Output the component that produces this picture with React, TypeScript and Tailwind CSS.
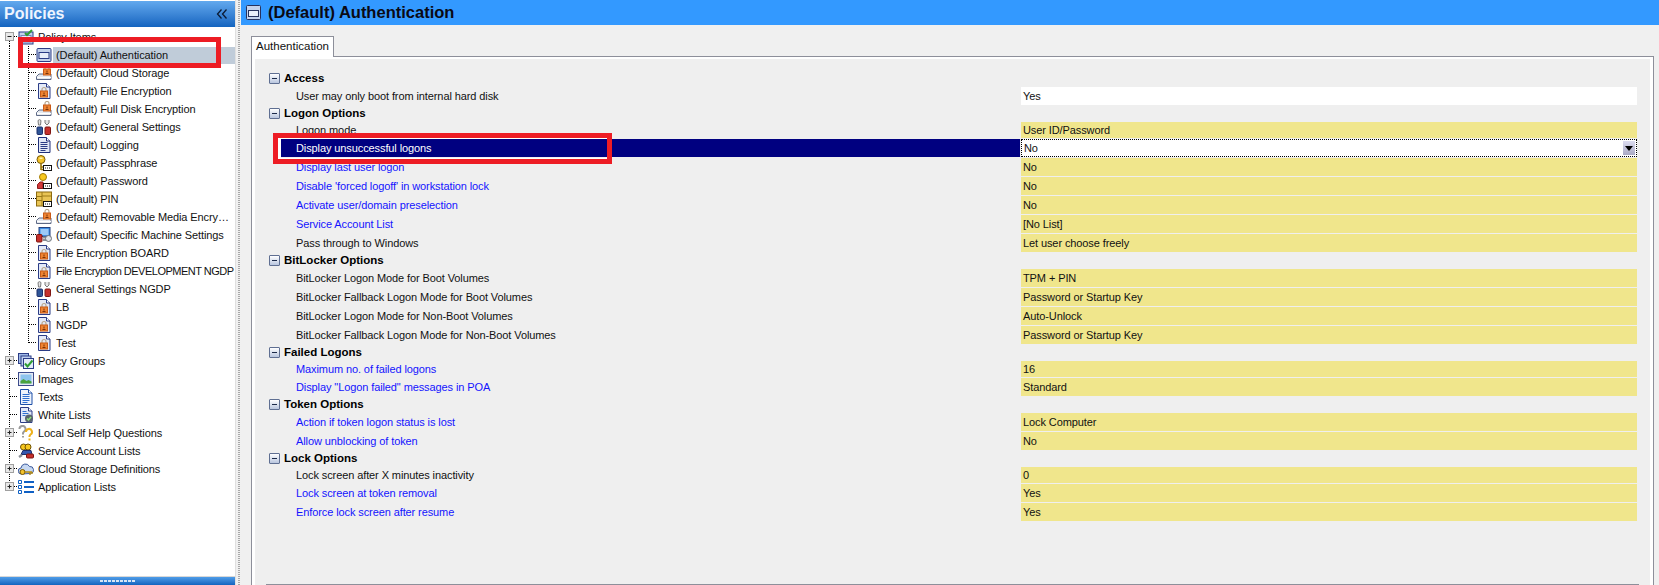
import React from 'react';

const FONT = "font-['Liberation_Sans',sans-serif]";

type IconKind =
  | 'window' | 'diskLock' | 'docLock' | 'settings' | 'doc' | 'passphrase' | 'password' | 'pin'
  | 'machine' | 'policy' | 'groups' | 'image' | 'texts' | 'whitelist' | 'help' | 'service' | 'cloud' | 'apps';

const Card = () => (
  <g>
    <rect x="7.5" y="10.5" width="8" height="5" fill="#fff" stroke="#111" />
    <path d="M9 13h1M11 13h1M13 13h1" stroke="#111" />
  </g>
);

const Lock = ({ x = 0, y = 0 }: { x?: number; y?: number }) => (
  <g transform={`translate(${x} ${y})`}>
    <path d="M6 7V5.5a2 2 0 0 1 4 0V7" fill="none" stroke="#b8a58c" strokeWidth="1.2" />
    <rect x="4.5" y="7" width="7" height="6" fill="#ee8433" stroke="#c85a17" />
    <path d="M8 8.5v2M6.5 11.5h3" stroke="#7a3208" />
  </g>
);

const Doc = ({ stroke = '#2b3c86', fill = '#e3e9f7' }: { stroke?: string; fill?: string }) => (
  <g>
    <path d="M2.5.5h8l3.5 3.5v11.5H2.5z" fill={fill} stroke={stroke} />
    <path d="M10.5.5V4H14" fill="#fff" stroke={stroke} />
  </g>
);

const TreeIcon = ({ kind }: { kind: IconKind }) => {
  const parts: Record<IconKind, React.ReactNode> = {
    window: (
      <g>
        <rect x="1" y="1.5" width="14" height="13" rx="1" fill="#c4d2ec" stroke="#2b3c86" />
        <rect x="3" y="5.5" width="10" height="6" fill="#e8eefa" stroke="#2b3c86" />
      </g>
    ),
    diskLock: (
      <g>
        <path d="M3 9h12v5.5H.5v-3z" fill="#e4e8ee" stroke="#5e6a86" />
        <path d="M1 12.5h14" stroke="#fff" />
        <Lock x={3} y={-3} />
      </g>
    ),
    docLock: (
      <g>
        <Doc />
        <Lock y={1} />
      </g>
    ),
    settings: (
      <g>
        <path d="M2 1.5a2 2 0 0 1 3 0L4.5 6h-2z" fill="#e4e4e4" stroke="#7c7c7c" />
        <path d="M9 1v3l2 2 2-2V1" fill="#e4e4e4" stroke="#7c7c7c" />
        <rect x="1" y="8" width="5.5" height="7.5" rx="1" fill="#2f5597" stroke="#1d2f6b" />
        <rect x="9" y="8" width="5.5" height="7.5" rx="1" fill="#c6302c" stroke="#7e1511" />
      </g>
    ),
    doc: (
      <g>
        <Doc stroke="#1f2f7a" />
        <path d="M4.500 5.500h7M4.500 7.500h7M4.500 9.500h7M4.500 11.500h7M4.500 13.500h5" stroke="#2b3c86" />
      </g>
    ),
    passphrase: (
      <g>
        <circle cx="5" cy="4.500" r="4" fill="#f3c22b" stroke="#7a5a05" />
        <rect x="3.500" y="2.500" width="3" height="1.500" fill="#fff3b0" />
        <path d="M5 8.500v6.500M5 12h2.500M5 14.500h2" stroke="#9c7405" strokeWidth="1.600" />
        <Card />
      </g>
    ),
    password: (
      <g>
        <circle cx="7" cy="4" r="3.500" fill="#f7c81e" stroke="#a57c04" />
        <path d="M1.500 15.500v-4l2.500-2.500h3v6.500z" fill="#d23a3a" stroke="#8f1c1c" />
        <Card />
      </g>
    ),
    pin: (
      <g>
        <rect x=".5" y="1" width="15" height="14" fill="#e9c455" stroke="#8c6a10" />
        <path d="M6 1v14M1 5.500h5M1 9.500h5M6 5h9" stroke="#9c7a18" />
        <Card />
      </g>
    ),
    machine: (
      <g>
        <rect x="3" y=".5" width="11" height="9" fill="#3f8fe6" stroke="#23417e" />
        <rect x="4.500" y="2" width="8" height="6" fill="#9ccaf7" />
        <rect x=".5" y="7.500" width="5.500" height="7.500" rx="1" fill="#c6302c" stroke="#7e1511" />
        <path d="M7 10.500h5M7 13h5" stroke="#8a8f96" strokeWidth="2" />
        <circle cx="12.500" cy="11.500" r="3" fill="#dfe2e6" stroke="#6d737b" />
      </g>
    ),
    policy: (
      <g>
        <rect x="1" y="3" width="14" height="12" fill="#c4d2ec" stroke="#2b3c86" />
        <rect x="3" y="6.500" width="10" height="6.500" fill="#e8eefa" stroke="#7787b8" />
        <path d="M7 4l2 2 5-5" fill="none" stroke="#2f9e33" strokeWidth="2" />
      </g>
    ),
    groups: (
      <g>
        <rect x=".5" y=".5" width="10" height="10" fill="#9fb8e6" stroke="#2b3c86" />
        <rect x="3" y="3" width="10" height="10" fill="#bfd0f0" stroke="#2b3c86" />
        <rect x="5.500" y="5.500" width="10" height="10" fill="#e3ebfa" stroke="#2b3c86" />
        <path d="M7 10.500l2.500 3 5-6" fill="none" stroke="#2f9e33" strokeWidth="2" />
      </g>
    ),
    image: (
      <g>
        <rect x=".5" y="1.500" width="15" height="13" fill="#e4e9f4" stroke="#3d4c8c" />
        <rect x="2.500" y="3.500" width="11" height="9" fill="#8ec4ee" />
        <path d="M2.500 12.500V10l3-2 3 2 2-1 3 1.500v2z" fill="#49a33e" />
      </g>
    ),
    texts: (
      <g>
        <Doc stroke="#1d4fa8" fill="#eef3fc" />
        <path d="M4.500 5.500h7M4.500 7.500h7M4.500 9.500h7M4.500 11.500h7M4.500 13.500h5" stroke="#2f6fd0" />
      </g>
    ),
    whitelist: (
      <g>
        <Doc />
        <path d="M4.500 4.500h4M4.500 6.500h6M4.500 8.500h3" stroke="#2f6fd0" />
        <circle cx="11" cy="11.500" r="4" fill="#58636e" />
        <path d="M9 11.500l1.500 1.500 2.500-3" fill="none" stroke="#8fe07a" strokeWidth="1.500" />
      </g>
    ),
    help: (
      <g>
        <path d="M1.500 4a3 3 0 1 1 4.500 2.500L5 8v1.500" fill="none" stroke="#9a9a9a" strokeWidth="2" />
        <path d="M5 11v1.500" stroke="#9a9a9a" strokeWidth="2" />
        <path d="M8 7a3 3 0 1 1 4.500 2.500L11.500 11v1" fill="none" stroke="#eeb11b" strokeWidth="2" />
        <path d="M11.500 13.500V15.500" stroke="#eeb11b" strokeWidth="2" />
      </g>
    ),
    service: (
      <g>
        <circle cx="5.500" cy="4" r="3" fill="#f7c81e" stroke="#6f5202" />
        <circle cx="10" cy="4" r="3" fill="#f7c81e" stroke="#6f5202" />
        <path d="M3 11.500L5 7.500h8l1 4z" fill="#3458b0" stroke="#1d2f6b" />
        <path d="M1 14l3-2" stroke="#8a8f96" strokeWidth="2.500" />
        <rect x="8.500" y="11" width="7" height="4" rx="1" fill="#c6302c" stroke="#7e1511" />
      </g>
    ),
    cloud: (
      <g>
        <path d="M3.500 13a3 3 0 0 1-.5-6 4.500 4.500 0 0 1 8.500-1.500 3.500 3.500 0 0 1 1 7z" fill="#c6d8f2" stroke="#3d5a9c" />
        <circle cx="4.500" cy="11" r="2.500" fill="#f3c22b" stroke="#7a5a05" />
        <path d="M7 11h7M12 11v3M14 11v2" stroke="#b58a0e" strokeWidth="1.400" />
      </g>
    ),
    apps: (
      <g>
        <path d="M.5 1.500h3v3h-3zM.5 6.500h3v3h-3zM.5 11.500h3v3h-3z" fill="#fff" stroke="#0f60c4" />
        <path d="M6 3h10M6 8h10M6 13h10" stroke="#0f60c4" strokeWidth="2" />
      </g>
    ),
  };
  return (
    <svg width="16" height="16" viewBox="0 0 16 16" className="shrink-0">
      {parts[kind]}
    </svg>
  );
};

// box with plus or minus, used in the tree
const Expander = ({ open }: { open: boolean }) => (
  <g>
    <rect x="5.500" y="4.500" width="8" height="8" fill="#e8e8e8" stroke="#a0a0a0" />
    <path d="M7.500 8.500h4" stroke="#222" />
    {!open && <path d="M9.500 6.500v4" stroke="#222" />}
  </g>
);

const Guide0 = ({ first, last, expander, open }: { first?: boolean; last?: boolean; expander?: boolean; open?: boolean }) => (
  <svg width="18" height="18" className="shrink-0">
    <path
      d={`M9.500 ${first ? 9 : 0}V${last ? 9 : 18}M10 8.500h8`}
      stroke="#000"
      strokeDasharray="1 1"
      fill="none"
    />
    {expander && <Expander open={!!open} />}
  </svg>
);

const Guide1 = ({ last }: { last?: boolean }) => (
  <svg width="36" height="18" className="shrink-0">
    <path d={`M9.500 0V18M28.500 0V${last ? 9 : 18}M29 8.500h7`} stroke="#000" strokeDasharray="1 1" fill="none" />
  </svg>
);

const children: { icon: IconKind; label: string; tight?: boolean }[] = [
  { icon: 'window', label: '(Default) Authentication' },
  { icon: 'diskLock', label: '(Default) Cloud Storage' },
  { icon: 'docLock', label: '(Default) File Encryption' },
  { icon: 'diskLock', label: '(Default) Full Disk Encryption' },
  { icon: 'settings', label: '(Default) General Settings' },
  { icon: 'doc', label: '(Default) Logging' },
  { icon: 'passphrase', label: '(Default) Passphrase' },
  { icon: 'password', label: '(Default) Password' },
  { icon: 'pin', label: '(Default) PIN' },
  { icon: 'diskLock', label: '(Default) Removable Media Encry…' },
  { icon: 'machine', label: '(Default) Specific Machine Settings' },
  { icon: 'docLock', label: 'File Encryption BOARD' },
  { icon: 'docLock', label: 'File Encryption DEVELOPMENT NGDP', tight: true },
  { icon: 'settings', label: 'General Settings NGDP' },
  { icon: 'docLock', label: 'LB' },
  { icon: 'docLock', label: 'NGDP' },
  { icon: 'docLock', label: 'Test' },
];

const roots: { icon: IconKind; label: string; expander?: boolean }[] = [
  { icon: 'groups', label: 'Policy Groups', expander: true },
  { icon: 'image', label: 'Images' },
  { icon: 'texts', label: 'Texts' },
  { icon: 'whitelist', label: 'White Lists' },
  { icon: 'help', label: 'Local Self Help Questions', expander: true },
  { icon: 'service', label: 'Service Account Lists' },
  { icon: 'cloud', label: 'Cloud Storage Definitions', expander: true },
  { icon: 'apps', label: 'Application Lists', expander: true },
];

const Sidebar = () => (
  <aside className="w-[236px] shrink-0 flex flex-col bg-white border-r border-[#e0e0e0]">
    <div className="h-[26px] mt-px flex items-center justify-between pl-[4px] pr-[7px] bg-gradient-to-b from-[#62a9ee] to-[#1264bf]">
      <span className="text-[16px] font-bold text-[#eef5ff] leading-none">Policies</span>
      <svg width="12" height="12" viewBox="0 0 12 12" fill="none" stroke="#0b1a33" strokeWidth="1.300">
        <path d="M5.500 1.500L1.500 6l4 4.500M10.500 1.500L6.500 6l4 4.500" />
      </svg>
    </div>
    <div className="relative flex-1 overflow-hidden pt-px text-[11px] tracking-[-0.1px] text-[#111]">
      <div className="h-[18px] flex items-center">
        <Guide0 first expander open />
        <TreeIcon kind="policy" />
        <span className="pl-[4px] pt-px leading-none">Policy Items</span>
      </div>
      {children.map((item, i) => (
        <div key={item.label} className="h-[18px] flex items-center">
          <Guide1 last={i === children.length - 1} />
          <TreeIcon kind={item.icon} />
          <span
            className={`ml-px pl-[3px] pt-px h-[17px] flex-1 flex items-center whitespace-nowrap ${i === 0 ? 'bg-[#c0ccd9]' : ''} ${item.tight ? 'tracking-[-0.5px]' : ''}`}
          >
            {item.label}
          </span>
        </div>
      ))}
      {roots.map((item, i) => (
        <div key={item.label} className="h-[18px] flex items-center">
          <Guide0 last={i === roots.length - 1} expander={item.expander} />
          <TreeIcon kind={item.icon} />
          <span className="pl-[4px] pt-px leading-none whitespace-nowrap">{item.label}</span>
        </div>
      ))}
      {/* red marker drawn on top of the screenshot */}
      <div className="absolute left-[18px] top-[10px] w-[203px] h-[31px] border-[5px] border-[#ed1c24]" />
    </div>
    <div className="h-[8px] mt-[2px] flex items-center justify-center gap-px bg-gradient-to-b from-[#4f9de8] to-[#1264bf] border-t border-[#d8d8d8] box-content">
      {[...Array(9)].map((_, i) => (
        <span key={i} className="w-[3px] h-[2px] bg-[#d8e6f5]" />
      ))}
    </div>
  </aside>
);

type Row = { label: string; value: string; blue?: boolean; short?: boolean; selected?: boolean; plain?: boolean };
type Section = { title: string; rows: Row[] };

const sections: Section[] = [
  { title: 'Access', rows: [{ label: 'User may only boot from internal hard disk', value: 'Yes', plain: true }] },
  {
    title: 'Logon Options',
    rows: [
      { label: 'Logon mode', value: 'User ID/Password', short: true },
      { label: 'Display unsuccessful logons', value: 'No', selected: true },
      { label: 'Display last user logon', value: 'No', blue: true },
      { label: "Disable 'forced logoff' in workstation lock", value: 'No', blue: true },
      { label: 'Activate user/domain preselection', value: 'No', blue: true },
      { label: 'Service Account List', value: '[No List]', blue: true },
      { label: 'Pass through to Windows', value: 'Let user choose freely' },
    ],
  },
  {
    title: 'BitLocker Options',
    rows: [
      { label: 'BitLocker Logon Mode for Boot Volumes', value: 'TPM + PIN' },
      { label: 'BitLocker Fallback Logon Mode for Boot Volumes', value: 'Password or Startup Key' },
      { label: 'BitLocker Logon Mode for Non-Boot Volumes', value: 'Auto-Unlock' },
      { label: 'BitLocker Fallback Logon Mode for Non-Boot Volumes', value: 'Password or Startup Key' },
    ],
  },
  {
    title: 'Failed Logons',
    rows: [
      { label: 'Maximum no. of failed logons', value: '16', blue: true, short: true },
      { label: 'Display "Logon failed" messages in POA', value: 'Standard', blue: true },
    ],
  },
  {
    title: 'Token Options',
    rows: [
      { label: 'Action if token logon status is lost', value: 'Lock Computer', blue: true },
      { label: 'Allow unblocking of token', value: 'No', blue: true },
    ],
  },
  {
    title: 'Lock Options',
    rows: [
      { label: 'Lock screen after X minutes inactivity', value: '0', short: true },
      { label: 'Lock screen at token removal', value: 'Yes', blue: true },
      { label: 'Enforce lock screen after resume', value: 'Yes', blue: true },
    ],
  },
];

const SectionToggle = () => (
  <span className="w-[11px] h-[11px] shrink-0 flex items-center justify-center rounded-[1px] border border-[#5f6f92] bg-gradient-to-b from-white to-[#b9c6df]">
    <span className="w-[5px] h-px bg-[#1c2a4a]" />
  </span>
);

const PropertyRow = ({ row }: { row: Row }) => (
  <div className={`flex ${row.short ? 'h-[16px]' : 'h-[18px]'}`}>
    <div
      className={`ml-[15px] w-[739px] mr-px pl-[15px] pt-px flex items-center whitespace-nowrap ${
        row.selected ? 'bg-[#000080] text-white' : row.blue ? 'text-[#1414ff]' : 'text-[#111]'
      }`}
    >
      {row.label}
    </div>
    <div
      className={`w-[616px] pl-[2px] flex items-center justify-between whitespace-nowrap text-[#111] ${
        row.selected ? 'bg-white border border-dotted border-black pr-px' : row.plain ? 'bg-white' : 'bg-[#f0e68c]'
      }`}
    >
      <span className="pt-px">{row.value}</span>
      {row.selected && (
        <span className="w-[12px] h-[14px] flex items-center justify-center bg-gradient-to-b from-[#dcdcf0] to-[#a9a9c4]">
          <span className="w-0 h-0 border-x-[4px] border-x-transparent border-t-[5px] border-t-black" />
        </span>
      )}
    </div>
  </div>
);

export default function App() {
  return (
    <div className={`w-[1659px] h-[585px] overflow-hidden flex bg-[#f0f0f0] ${FONT}`}>
      <Sidebar />
      <div className="w-[5px] shrink-0 flex justify-center">
        <div className="w-[2px] bg-[repeating-linear-gradient(180deg,#a8a8a8_0,#a8a8a8_1px,#f0f0f0_1px,#f0f0f0_2px)]" />
      </div>
      <main className="flex-1 min-w-0 flex flex-col">
        <header className="h-[25px] shrink-0 flex items-center pl-[5px] bg-[#3399ff]">
          <svg width="15" height="15" viewBox="0 0 15 15" className="shrink-0">
            <rect x=".5" y=".5" width="14" height="14" rx="1" fill="#c4d2ec" stroke="#26325e" />
            <rect x="2.500" y="5.500" width="10" height="6" fill="#e8eefa" stroke="#26325e" />
          </svg>
          <h1 className="pl-[7px] text-[16.500px] font-bold leading-none text-[#0a0a14] whitespace-nowrap">
            (Default) Authentication
          </h1>
        </header>
        <div className="flex-1 min-h-0 flex flex-col pt-[11px] pl-[10px] pr-[5px]">
          <div className="relative w-[83px] h-[21px] -mb-px flex items-center justify-center bg-white border border-b-0 border-[#8d8f9a] text-[11.500px] text-[#111]">
            Authentication
          </div>
          <div className="flex-1 min-h-0 flex flex-col border border-b-0 border-[#8d8f9a]">
            <div className="flex-1 min-h-0 flex flex-col bg-[#efefef] border-t-[2px] border-x-[3px] border-white pt-[11px] pl-[11px] pr-[11px]">
              <div className="relative flex-1 min-h-0 border-b border-[#8d8f9a] text-[11px] tracking-[-0.1px]">
                {sections.map((section) => (
                  <section key={section.title}>
                    <div className="h-[17px] pl-[3px] flex items-center gap-[4px] font-bold text-black">
                      <SectionToggle />
                      <span className="pt-px text-[11.500px] tracking-normal">{section.title}</span>
                    </div>
                    <div className="flex flex-col gap-px">
                      {section.rows.map((row) => (
                        <PropertyRow key={row.label} row={row} />
                      ))}
                    </div>
                  </section>
                ))}
                {/* red marker drawn on top of the screenshot */}
                <div className="absolute left-[7px] top-[63px] w-[339px] h-[31px] border-[5px] border-[#ed1c24] shadow-[inset_0_1px_0_#fff,inset_0_-1px_0_#fff,inset_3px_0_0_#fff]" />
              </div>
            </div>
          </div>
        </div>
      </main>
    </div>
  );
}
